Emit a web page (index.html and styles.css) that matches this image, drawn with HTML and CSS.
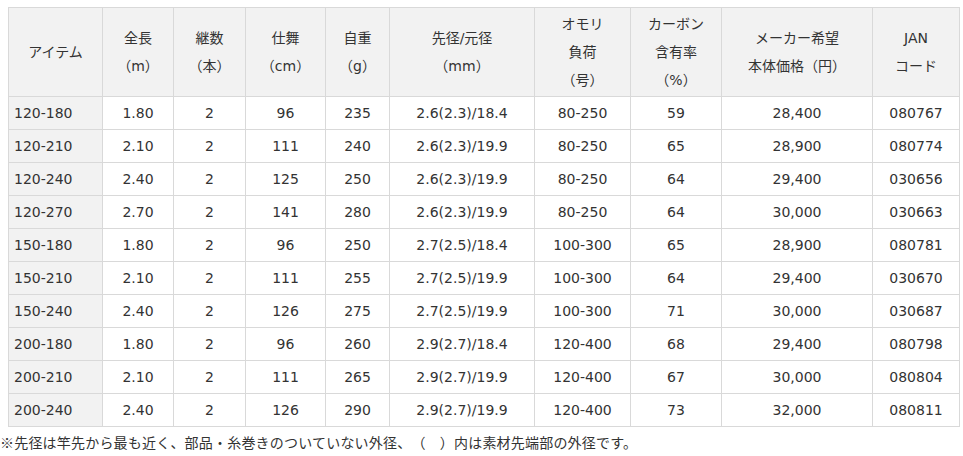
FILE: index.html
```html
<!DOCTYPE html>
<html lang="ja">
<head>
<meta charset="utf-8">
<link rel="stylesheet" href="styles.css">
</head>
<body>
<table class="spec">
<colgroup>
<col class="c1"><col class="c2"><col class="c3"><col class="c4"><col class="c5"><col class="c6"><col class="c7"><col class="c8"><col class="c9"><col class="c10">
</colgroup>
<thead>
<tr>
<th>アイテム</th>
<th>全長<br>（m）</th>
<th>継数<br>（本）</th>
<th>仕舞<br>（cm）</th>
<th>自重<br>（g）</th>
<th>先径/元径<br>（mm）</th>
<th>オモリ<br>負荷<br>（号）</th>
<th>カーボン<br>含有率<br>（%）</th>
<th>メーカー希望<br>本体価格（円）</th>
<th>JAN<br>コード</th>
</tr>
</thead>
<tbody>
<tr><td>120-180</td><td>1.80</td><td>2</td><td>96</td><td>235</td><td>2.6(2.3)/18.4</td><td>80-250</td><td>59</td><td>28,400</td><td>080767</td></tr>
<tr><td>120-210</td><td>2.10</td><td>2</td><td>111</td><td>240</td><td>2.6(2.3)/19.9</td><td>80-250</td><td>65</td><td>28,900</td><td>080774</td></tr>
<tr><td>120-240</td><td>2.40</td><td>2</td><td>125</td><td>250</td><td>2.6(2.3)/19.9</td><td>80-250</td><td>64</td><td>29,400</td><td>030656</td></tr>
<tr><td>120-270</td><td>2.70</td><td>2</td><td>141</td><td>280</td><td>2.6(2.3)/19.9</td><td>80-250</td><td>64</td><td>30,000</td><td>030663</td></tr>
<tr><td>150-180</td><td>1.80</td><td>2</td><td>96</td><td>250</td><td>2.7(2.5)/18.4</td><td>100-300</td><td>65</td><td>28,900</td><td>080781</td></tr>
<tr><td>150-210</td><td>2.10</td><td>2</td><td>111</td><td>255</td><td>2.7(2.5)/19.9</td><td>100-300</td><td>64</td><td>29,400</td><td>030670</td></tr>
<tr><td>150-240</td><td>2.40</td><td>2</td><td>126</td><td>275</td><td>2.7(2.5)/19.9</td><td>100-300</td><td>71</td><td>30,000</td><td>030687</td></tr>
<tr><td>200-180</td><td>1.80</td><td>2</td><td>96</td><td>260</td><td>2.9(2.7)/18.4</td><td>120-400</td><td>68</td><td>29,400</td><td>080798</td></tr>
<tr><td>200-210</td><td>2.10</td><td>2</td><td>111</td><td>265</td><td>2.9(2.7)/19.9</td><td>120-400</td><td>67</td><td>30,000</td><td>080804</td></tr>
<tr><td>200-240</td><td>2.40</td><td>2</td><td>126</td><td>290</td><td>2.9(2.7)/19.9</td><td>120-400</td><td>73</td><td>32,000</td><td>080811</td></tr>
</tbody>
</table>
<p class="note">※先径は竿先から最も近く、部品・糸巻きのついていない外径、（　）内は素材先端部の外径です。</p>
</body>
</html>
```
FILE: styles.css
```css
html, body {
  margin: 0;
  padding: 0;
  background: #fff;
}
body {
  padding: 7px 0 0 8px;
  font-family: "DejaVu Sans", "Noto Sans CJK JP", sans-serif;
  font-size: 14px;
  color: #333;
  text-spacing-trim: space-all;
}
.spec {
  border-collapse: collapse;
  table-layout: fixed;
  width: 951px;
}
.c1 { width: 94px; }
.c2 { width: 71px; }
.c3 { width: 72px; }
.c4 { width: 80px; }
.c5 { width: 64px; }
.c6 { width: 145px; }
.c7 { width: 96px; }
.c8 { width: 91px; }
.c9 { width: 151px; }
.c10 { width: 87px; }
.spec th, .spec td {
  border: 1px solid #d9d9d9;
  text-align: center;
  line-height: 28px;
  padding: 2px 0;
  font-weight: normal;
  white-space: nowrap;
}
.spec th {
  background: #f2f2f2;
  height: 84px;
}
.spec td {
  height: 28px;
}
.spec td:first-child {
  background: #f2f2f2;
  text-align: left;
  padding-left: 5px;
}
.note {
  margin: 3px 0 0 -8px;
  line-height: 24px;
  font-family: "Noto Sans CJK JP", sans-serif;
  letter-spacing: 0.2px;
}
```
